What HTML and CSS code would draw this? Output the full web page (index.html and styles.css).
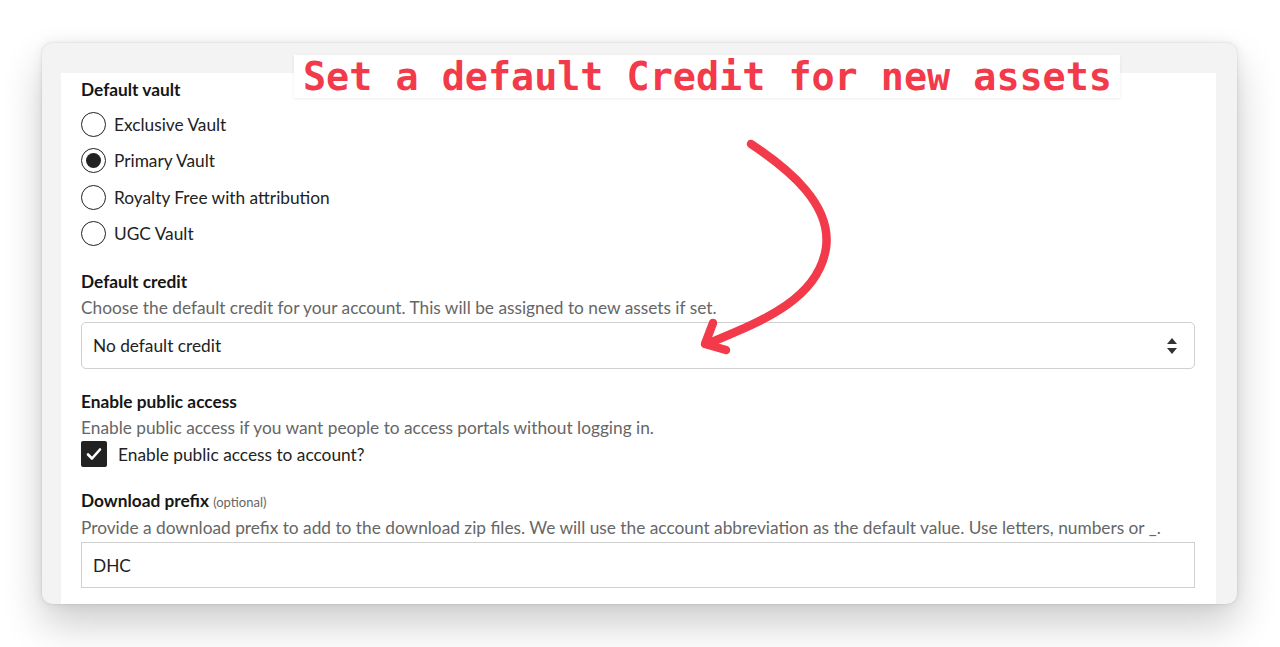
FILE: index.html
```html
<!DOCTYPE html>
<html lang="en">

<head>
    <meta charset="UTF-8">
    <meta name="viewport" content="width=device-width, initial-scale=1.0">
    <title>Account settings</title>
    <link rel="stylesheet" href="styles.css">
</head>

<body>
    <div class="win">
        <div class="panel">
            <div class="field">
                <div class="label">Default vault</div>
                <ul class="radios">
                    <li><span class="radio"></span>Exclusive Vault</li>
                    <li><span class="radio on"></span>Primary Vault</li>
                    <li><span class="radio"></span>Royalty Free with attribution</li>
                    <li><span class="radio"></span>UGC Vault</li>
                </ul>
            </div>

            <div class="field credit">
                <div class="label">Default credit</div>
                <p class="desc">Choose the default credit for your account. This will be assigned to new assets if set.</p>
                <div class="select">
                    <span>No default credit</span>
                    <svg class="updown" width="10" height="16" viewBox="0 0 10 16">
                        <path d="M5 0 L10 6 L0 6 Z M5 16 L10 10 L0 10 Z" fill="#333"/>
                    </svg>
                </div>
            </div>

            <div class="field public">
                <div class="label">Enable public access</div>
                <p class="desc">Enable public access if you want people to access portals without logging in.</p>
                <label class="check_row">
                    <span class="check">
                        <svg width="16" height="14" viewBox="0 0 16 14">
                            <path d="M2 7.5 L6 11.5 L14 2.5" fill="none" stroke="#fff" stroke-width="2.6" stroke-linecap="round" stroke-linejoin="round"/>
                        </svg>
                    </span>
                    Enable public access to account?
                </label>
            </div>

            <div class="field prefix">
                <div class="label">Download prefix <small>(optional)</small></div>
                <p class="desc">Provide a download prefix to add to the download zip files. We will use the account abbreviation as the default value. Use letters, numbers or _.</p>
                <div class="input">DHC</div>
            </div>
        </div>

        <div class="note">Set a default Credit for new assets</div>
        <svg class="arrow" width="1280" height="647" viewBox="0 0 1280 647">
            <path d="M751 144 C 790 170 832 205 826 248 C 818 300 760 322 707 344" fill="none" stroke="#f23a4a" stroke-width="8.5" stroke-linecap="round"/>
            <path d="M713 323 L705 344 L726 350" fill="none" stroke="#f23a4a" stroke-width="8.5" stroke-linecap="round" stroke-linejoin="round"/>
        </svg>
    </div>
</body>

</html>
```

FILE: styles.css
```css
* {
    margin: 0;
    padding: 0;
    box-sizing: border-box;
}

html {
    background-color: #fff;
}

body {
    min-height: 647px;
    padding: 43px 0 43px 42px;
    font-family: Lato, "Open Sans", sans-serif;
    font-size: 17.3px;
    color: #1c1c1c;
}

.win {
    width: 1195px;
    height: 561px;
    padding: 30px 21px 0 19px;
    background-color: #f3f3f3;
    border-radius: 10px;
    box-shadow: 0 20px 40px rgba(0, 0, 0, 0.2), 0 0 12px rgba(0, 0, 0, 0.07), 0 0 2px rgba(0, 0, 0, 0.15);
}

.panel {
    height: 100%;
    padding: 7px 21px 0 20px;
    background-color: #fff;
}

.label {
    font-weight: 700;
    line-height: 20px;
    color: #161616;
}

.label small {
    font-weight: 400;
    font-size: 13px;
    color: #666;
}

.desc {
    margin-top: 6px;
    line-height: 20px;
    color: #666;
}

.radios {
    margin-top: 6px;
    list-style: none;
}

.radios li {
    display: flex;
    align-items: center;
    gap: 8px;
    height: 36.5px;
    color: #222;
}

.radio {
    display: flex;
    align-items: center;
    justify-content: center;
    width: 25px;
    height: 25px;
    border: 1.5px solid #222;
    border-radius: 50%;
}

.radio.on::after {
    content: "";
    width: 15px;
    height: 15px;
    border-radius: 50%;
    background-color: #222;
}

.credit {
    margin-top: 20px;
}

.select {
    display: flex;
    align-items: center;
    justify-content: space-between;
    height: 47px;
    margin-top: 4px;
    padding: 0 17px 0 11px;
    border: 1px solid #d0d0d0;
    border-radius: 5px;
    color: #222;
}

.public {
    margin-top: 23px;
}

.check_row {
    display: flex;
    align-items: center;
    gap: 11px;
    margin-top: 3px;
    color: #222;
}

.check {
    display: flex;
    align-items: center;
    justify-content: center;
    width: 26px;
    height: 26px;
    border-radius: 2px;
    background-color: #222;
}

.prefix {
    margin-top: 24px;
}

.input {
    display: flex;
    align-items: center;
    height: 46px;
    margin-top: 4px;
    padding-left: 11px;
    border: 1px solid #d0d0d0;
    color: #222;
}

/* callout drawn over the form */
.note {
    position: absolute;
    top: 55px;
    left: 294px;
    width: 826px;
    height: 43px;
    padding-left: 9px;
    background-color: #fff;
    box-shadow: 0 1px 3px rgba(0, 0, 0, 0.08);
    font-family: "DejaVu Sans Mono", "Liberation Mono", monospace;
    font-weight: 700;
    font-size: 38.4px;
    line-height: 43px;
    color: #f23a4a;
    white-space: nowrap;
}

.arrow {
    position: absolute;
    top: 0;
    left: 0;
    pointer-events: none;
}
```
